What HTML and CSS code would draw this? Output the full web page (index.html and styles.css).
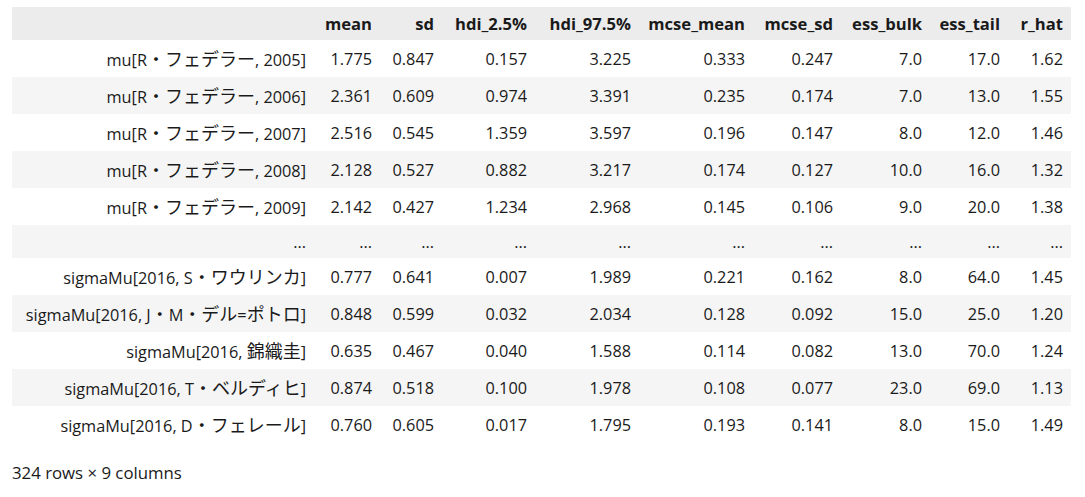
FILE: index.html
```html
<!DOCTYPE html>
<html lang="ja">
<head>
<meta charset="utf-8">
<title>DataFrame</title>
<link rel="stylesheet" href="styles.css">
</head>
<body>
<div class="output">
<table class="dataframe">
<colgroup>
<col class="c-idx"><col class="c-mean"><col class="c-sd"><col class="c-hdi1"><col class="c-hdi2"><col class="c-mm"><col class="c-ms"><col class="c-eb"><col class="c-et"><col class="c-rh">
</colgroup>
<thead>
<tr><th></th><th>mean</th><th>sd</th><th>hdi_2.5%</th><th>hdi_97.5%</th><th>mcse_mean</th><th>mcse_sd</th><th>ess_bulk</th><th>ess_tail</th><th>r_hat</th></tr>
</thead>
<tbody>
<tr><th>mu[R<span class="ja">・フェデラー</span>, 2005]</th><td>1.775</td><td>0.847</td><td>0.157</td><td>3.225</td><td>0.333</td><td>0.247</td><td>7.0</td><td>17.0</td><td>1.62</td></tr>
<tr><th>mu[R<span class="ja">・フェデラー</span>, 2006]</th><td>2.361</td><td>0.609</td><td>0.974</td><td>3.391</td><td>0.235</td><td>0.174</td><td>7.0</td><td>13.0</td><td>1.55</td></tr>
<tr><th>mu[R<span class="ja">・フェデラー</span>, 2007]</th><td>2.516</td><td>0.545</td><td>1.359</td><td>3.597</td><td>0.196</td><td>0.147</td><td>8.0</td><td>12.0</td><td>1.46</td></tr>
<tr><th>mu[R<span class="ja">・フェデラー</span>, 2008]</th><td>2.128</td><td>0.527</td><td>0.882</td><td>3.217</td><td>0.174</td><td>0.127</td><td>10.0</td><td>16.0</td><td>1.32</td></tr>
<tr><th>mu[R<span class="ja">・フェデラー</span>, 2009]</th><td>2.142</td><td>0.427</td><td>1.234</td><td>2.968</td><td>0.145</td><td>0.106</td><td>9.0</td><td>20.0</td><td>1.38</td></tr>
<tr class="gap"><th>...</th><td>...</td><td>...</td><td>...</td><td>...</td><td>...</td><td>...</td><td>...</td><td>...</td><td>...</td></tr>
<tr><th>sigmaMu[2016, S<span class="ja">・ワウリンカ</span>]</th><td>0.777</td><td>0.641</td><td>0.007</td><td>1.989</td><td>0.221</td><td>0.162</td><td>8.0</td><td>64.0</td><td>1.45</td></tr>
<tr><th>sigmaMu[2016, J<span class="ja">・</span>M<span class="ja">・デル</span>=<span class="ja">ポトロ</span>]</th><td>0.848</td><td>0.599</td><td>0.032</td><td>2.034</td><td>0.128</td><td>0.092</td><td>15.0</td><td>25.0</td><td>1.20</td></tr>
<tr><th>sigmaMu[2016, <span class="ja">錦織圭</span>]</th><td>0.635</td><td>0.467</td><td>0.040</td><td>1.588</td><td>0.114</td><td>0.082</td><td>13.0</td><td>70.0</td><td>1.24</td></tr>
<tr><th>sigmaMu[2016, T<span class="ja">・ベルディヒ</span>]</th><td>0.874</td><td>0.518</td><td>0.100</td><td>1.978</td><td>0.108</td><td>0.077</td><td>23.0</td><td>69.0</td><td>1.13</td></tr>
<tr><th>sigmaMu[2016, D<span class="ja">・フェレール</span>]</th><td>0.760</td><td>0.605</td><td>0.017</td><td>1.795</td><td>0.193</td><td>0.141</td><td>8.0</td><td>15.0</td><td>1.49</td></tr>
</tbody>
</table>
<p class="shape">324 rows × 9 columns</p>
</div>
</body>
</html>
```

FILE: styles.css
```css
html, body {
  margin: 0;
  padding: 0;
  background: #ffffff;
}

body {
  font-family: "Open Sans", "Noto Sans CJK JP", sans-serif;
  font-size: 16.3px;
  color: #1a1a1a;
}

.output {
  padding: 7px 0 0 12px;
}

.dataframe {
  table-layout: fixed;
  width: 1059px;
  border-collapse: collapse;
  border-spacing: 0;
}

.c-idx { width: 302px; }
.c-mean { width: 66px; }
.c-sd { width: 62px; }
.c-hdi1 { width: 93px; }
.c-hdi2 { width: 104px; }
.c-mm { width: 114px; }
.c-ms { width: 88px; }
.c-eb { width: 89px; }
.c-et { width: 78px; }
.c-rh { width: 63px; }

.dataframe th,
.dataframe td {
  padding: 0 8px;
  text-align: right;
  white-space: nowrap;
  line-height: 20px;
  vertical-align: middle;
}

.dataframe thead tr {
  height: 33px;
  background: #ececec;
}

.dataframe thead th {
  font-weight: 700;
  font-size: 16.6px;
}

.dataframe tbody tr {
  height: 37px;
  background: #ffffff;
}

.dataframe tbody tr.gap {
  height: 33px;
}

.dataframe tbody tr:nth-child(even) {
  background: #f5f5f5;
}

.dataframe tbody th {
  font-weight: 400;
}

.ja {
  font-family: "Noto Sans CJK JP", sans-serif;
  font-size: 18px;
}

.shape {
  margin: 20px 0 0 0;
  line-height: 20px;
  font-size: 16.8px;
}
```
